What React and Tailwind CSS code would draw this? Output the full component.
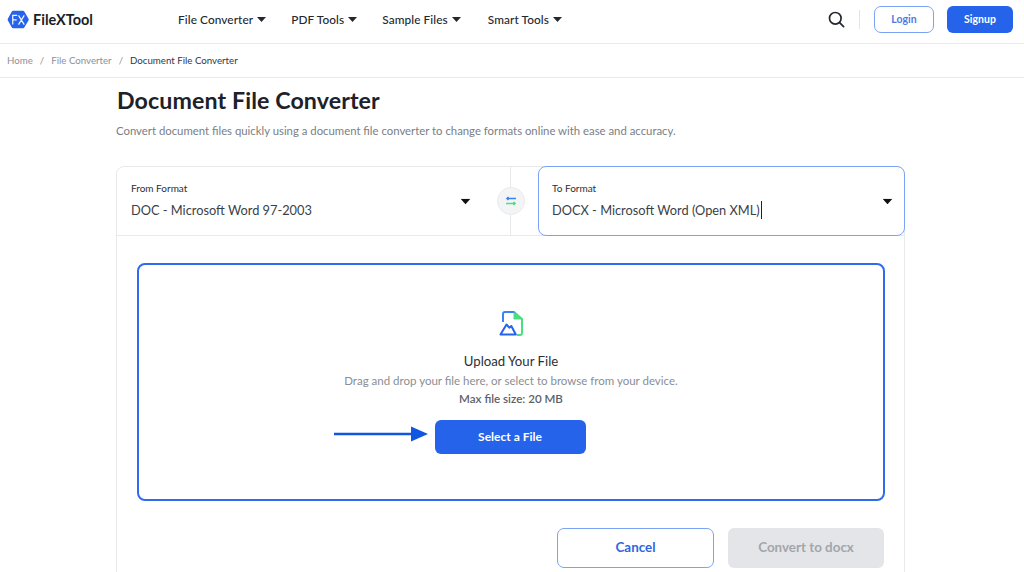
import React from "react";

const Caret = ({ className = "" }) => (
  <svg width="9" height="5" viewBox="0 0 9 5" className={className}><path d="M0 0h9L4.5 5z" fill="currentColor" /></svg>
);

const NavItem = ({ label, className = "" }) => (
  <div className={`flex items-center gap-[4px] text-[11.8px] font-medium text-[#23272e] tracking-[0.1px] ${className}`}>
    <span>{label}</span>
    <Caret />
  </div>
);

const Logo = () => (
  <svg width="23" height="22" viewBox="0 0 26 24" preserveAspectRatio="none">
    <path d="M7 2.5h11a2 2 0 0 1 1.7 1l4.6 7.5a2 2 0 0 1 0 2l-4.6 7.5a2 2 0 0 1-1.7 1H7a2 2 0 0 1-1.7-1L1 13a2 2 0 0 1 0-2l4.3-7.5A2 2 0 0 1 7 2.5z" fill="#2563eb" transform="translate(0 -0.5)" />
    <path d="M6.5 17V7h5M6.5 11.8h4.4M13 7l6.5 10M19.5 7 13 17" stroke="#f2f6ff" strokeWidth="1.4" fill="none" />
  </svg>
);

const FormatBox = ({ label, value, active, cursor, caretClass }) => (
  <div className={`relative flex-1 h-full pr-4 pt-[15px] ${active ? "pl-[13px] border border-[#7ba3f5] rounded-[8px] bg-white" : "pl-[14px]"}`}>
    <div className="text-[10px] leading-[13px] text-[#2b2f36]">{label}</div>
    <div className="mt-[5px] text-[12.8px] leading-[20px] text-[#3a3f47] whitespace-nowrap flex items-center">
      {value}
      {cursor && <span className="inline-block w-px h-[18px] bg-[#222] ml-px" />}
    </div>
    <Caret className={`absolute top-[32px] scale-110 text-[#111] ${caretClass}`} />
  </div>
);

export default function App() {
  return (
    <div className="w-[1024px] h-[572px] overflow-hidden bg-white font-['Lato','Liberation_Sans',sans-serif]">
      <header className="h-[44px] border-b border-[#e8e9eb] flex items-center pl-[7px] pr-[11px] pb-[4px]">
        <div className="flex items-center gap-[3px] w-[171px]">
          <Logo />
          <span className="text-[14.5px] font-bold text-[#1b1f26]">FileXTool</span>
        </div>
        <nav className="flex items-center gap-[25px]">
          <NavItem label="File Converter" />
          <NavItem label="PDF Tools" />
          <NavItem label="Sample Files" />
          <NavItem label="Smart Tools" className="ml-[2px]" />
        </nav>
        <div className="ml-auto flex items-center">
          <svg width="17" height="17" viewBox="0 0 17 17" fill="none" stroke="#23272e" strokeWidth="1.7" strokeLinecap="round">
            <circle cx="7.3" cy="7.3" r="5.8" /><path d="m11.6 11.6 4 4" />
          </svg>
          <div className="w-px h-[19px] bg-[#e4e5e7] ml-[14px] mr-[14px]" />
          <button className="w-[60px] h-[27px] border border-[#7ba3f5] rounded-[7px] text-[10.5px] font-bold text-[#4f7be0]">Login</button>
          <button className="w-[66px] h-[27px] ml-[13px] rounded-[6px] bg-[#2563eb] text-[10.5px] font-bold text-white">Signup</button>
        </div>
      </header>

      <div className="h-[34px] border-b border-[#e8e9eb] flex items-center pl-[7px] pb-[2px] text-[9.7px] leading-[14px] text-[#8d9198]">
        <span>Home</span>
        <span className="mx-[7px]">/</span>
        <span>File Converter</span>
        <span className="mx-[7px]">/</span>
        <span className="text-[#33373e]">Document File Converter</span>
      </div>

      <main className="w-[789px] ml-[116px]">
        <h1 className="mt-[9px] pl-px text-[23.2px] leading-[26px] font-bold text-[#1d2128] tracking-[0.1px]">Document File Converter</h1>
        <p className="mt-[10px] text-[11.35px] leading-[16px] text-[#7a7e85]">Convert document files quickly using a document file converter to change formats online with ease and accuracy.</p>

        <section className="mt-[27px] h-[420px] border border-[#e8e9eb] rounded-t-[8px]">
          <div className="relative flex h-[69px] border-b border-[#e8e9eb]">
            <div className="w-[394px] h-full border-r border-[#e8e9eb]"><FormatBox caretClass="right-[40px]" label="From Format" value="DOC - Microsoft Word 97-2003" /></div>
            <div className="w-[27px]" />
            <div className="flex-1 h-[70px] -mt-px -mr-px"><FormatBox active cursor caretClass="right-[12px]" label="To Format" value="DOCX - Microsoft Word (Open XML)" /></div>
            <div className="absolute left-[380px] top-[20px] w-[28px] h-[28px] rounded-full bg-[#f3f4f5] border border-[#e9eaec] flex items-center justify-center">
              <svg width="12" height="10" viewBox="0 0 12 10" fill="none" strokeWidth="1.6">
                <path d="M11 2.5H2M3.5 1 2 2.5 3.5 4" stroke="#3b82f6" />
                <path d="M1 7.5h9M8.5 6 10 7.5 8.5 9" stroke="#4ade80" />
              </svg>
            </div>
          </div>

          <div className="ml-[20px] mr-[19px] mt-[27px] h-[238px] border-2 border-[#2f6bef] rounded-[8px] flex flex-col items-center pt-[46px]">
            <svg width="24" height="25" viewBox="0 0 24 25" fill="none" strokeWidth="2">
              <defs>
                <linearGradient id="g" x1="0" y1="0" x2="1" y2="0"><stop offset="0.5" stopColor="#3b82f6" /><stop offset="0.72" stopColor="#4ade80" /></linearGradient>
              </defs>
              <path d="M4 11V3a2 2 0 0 1 2-2h9l8 7v14a2 2 0 0 1-2 2h-3" stroke="url(#g)" />
              <path d="M15 2v6h7z" fill="#4ade80" stroke="#4ade80" strokeWidth="1" />
              <path d="M1.5 23.5 7.5 13.5l2.8 3.2 2-1.7 4.5 8.5z" stroke="#2563eb" strokeLinejoin="round" />
            </svg>
            <div className="mt-[16px] text-[13.2px] leading-[18px] text-[#2b2f36]">Upload Your File</div>
            <div className="mt-[3px] text-[11.5px] leading-[15px] text-[#8a8e95]">Drag and drop your file here, or select to browse from your device.</div>
            <div className="mt-[2px] text-[11.6px] leading-[17px] font-semibold text-[#5c6068]">Max file size: 20 MB</div>
            <div className="relative mt-[13px] mr-[2px]">
              <svg width="94" height="16" viewBox="0 0 94 16" className="absolute left-[-101px] top-[6px]">
                <path d="M0 8h78" stroke="#0f56e0" strokeWidth="2.5" /><path d="M77 0.5 94 8 77 15.5z" fill="#0f56e0" />
              </svg>
              <button className="block w-[151px] h-[34px] rounded-[6px] bg-[#2563eb] text-[12px] font-bold text-white">Select a File</button>
            </div>
          </div>

          <div className="flex justify-end gap-[14px] mt-[27px] mr-[20px]">
            <button className="w-[157px] h-[40px] pb-px border border-[#7ba3f5] rounded-[7px] text-[13.4px] font-bold text-[#2f66e0]">Cancel</button>
            <button className="w-[156px] h-[40px] pb-[2px] rounded-[6px] bg-[#e4e5e8] text-[13.4px] font-bold text-[#a3a5ab]">Convert to docx</button>
          </div>
        </section>
      </main>
    </div>
  );
}
